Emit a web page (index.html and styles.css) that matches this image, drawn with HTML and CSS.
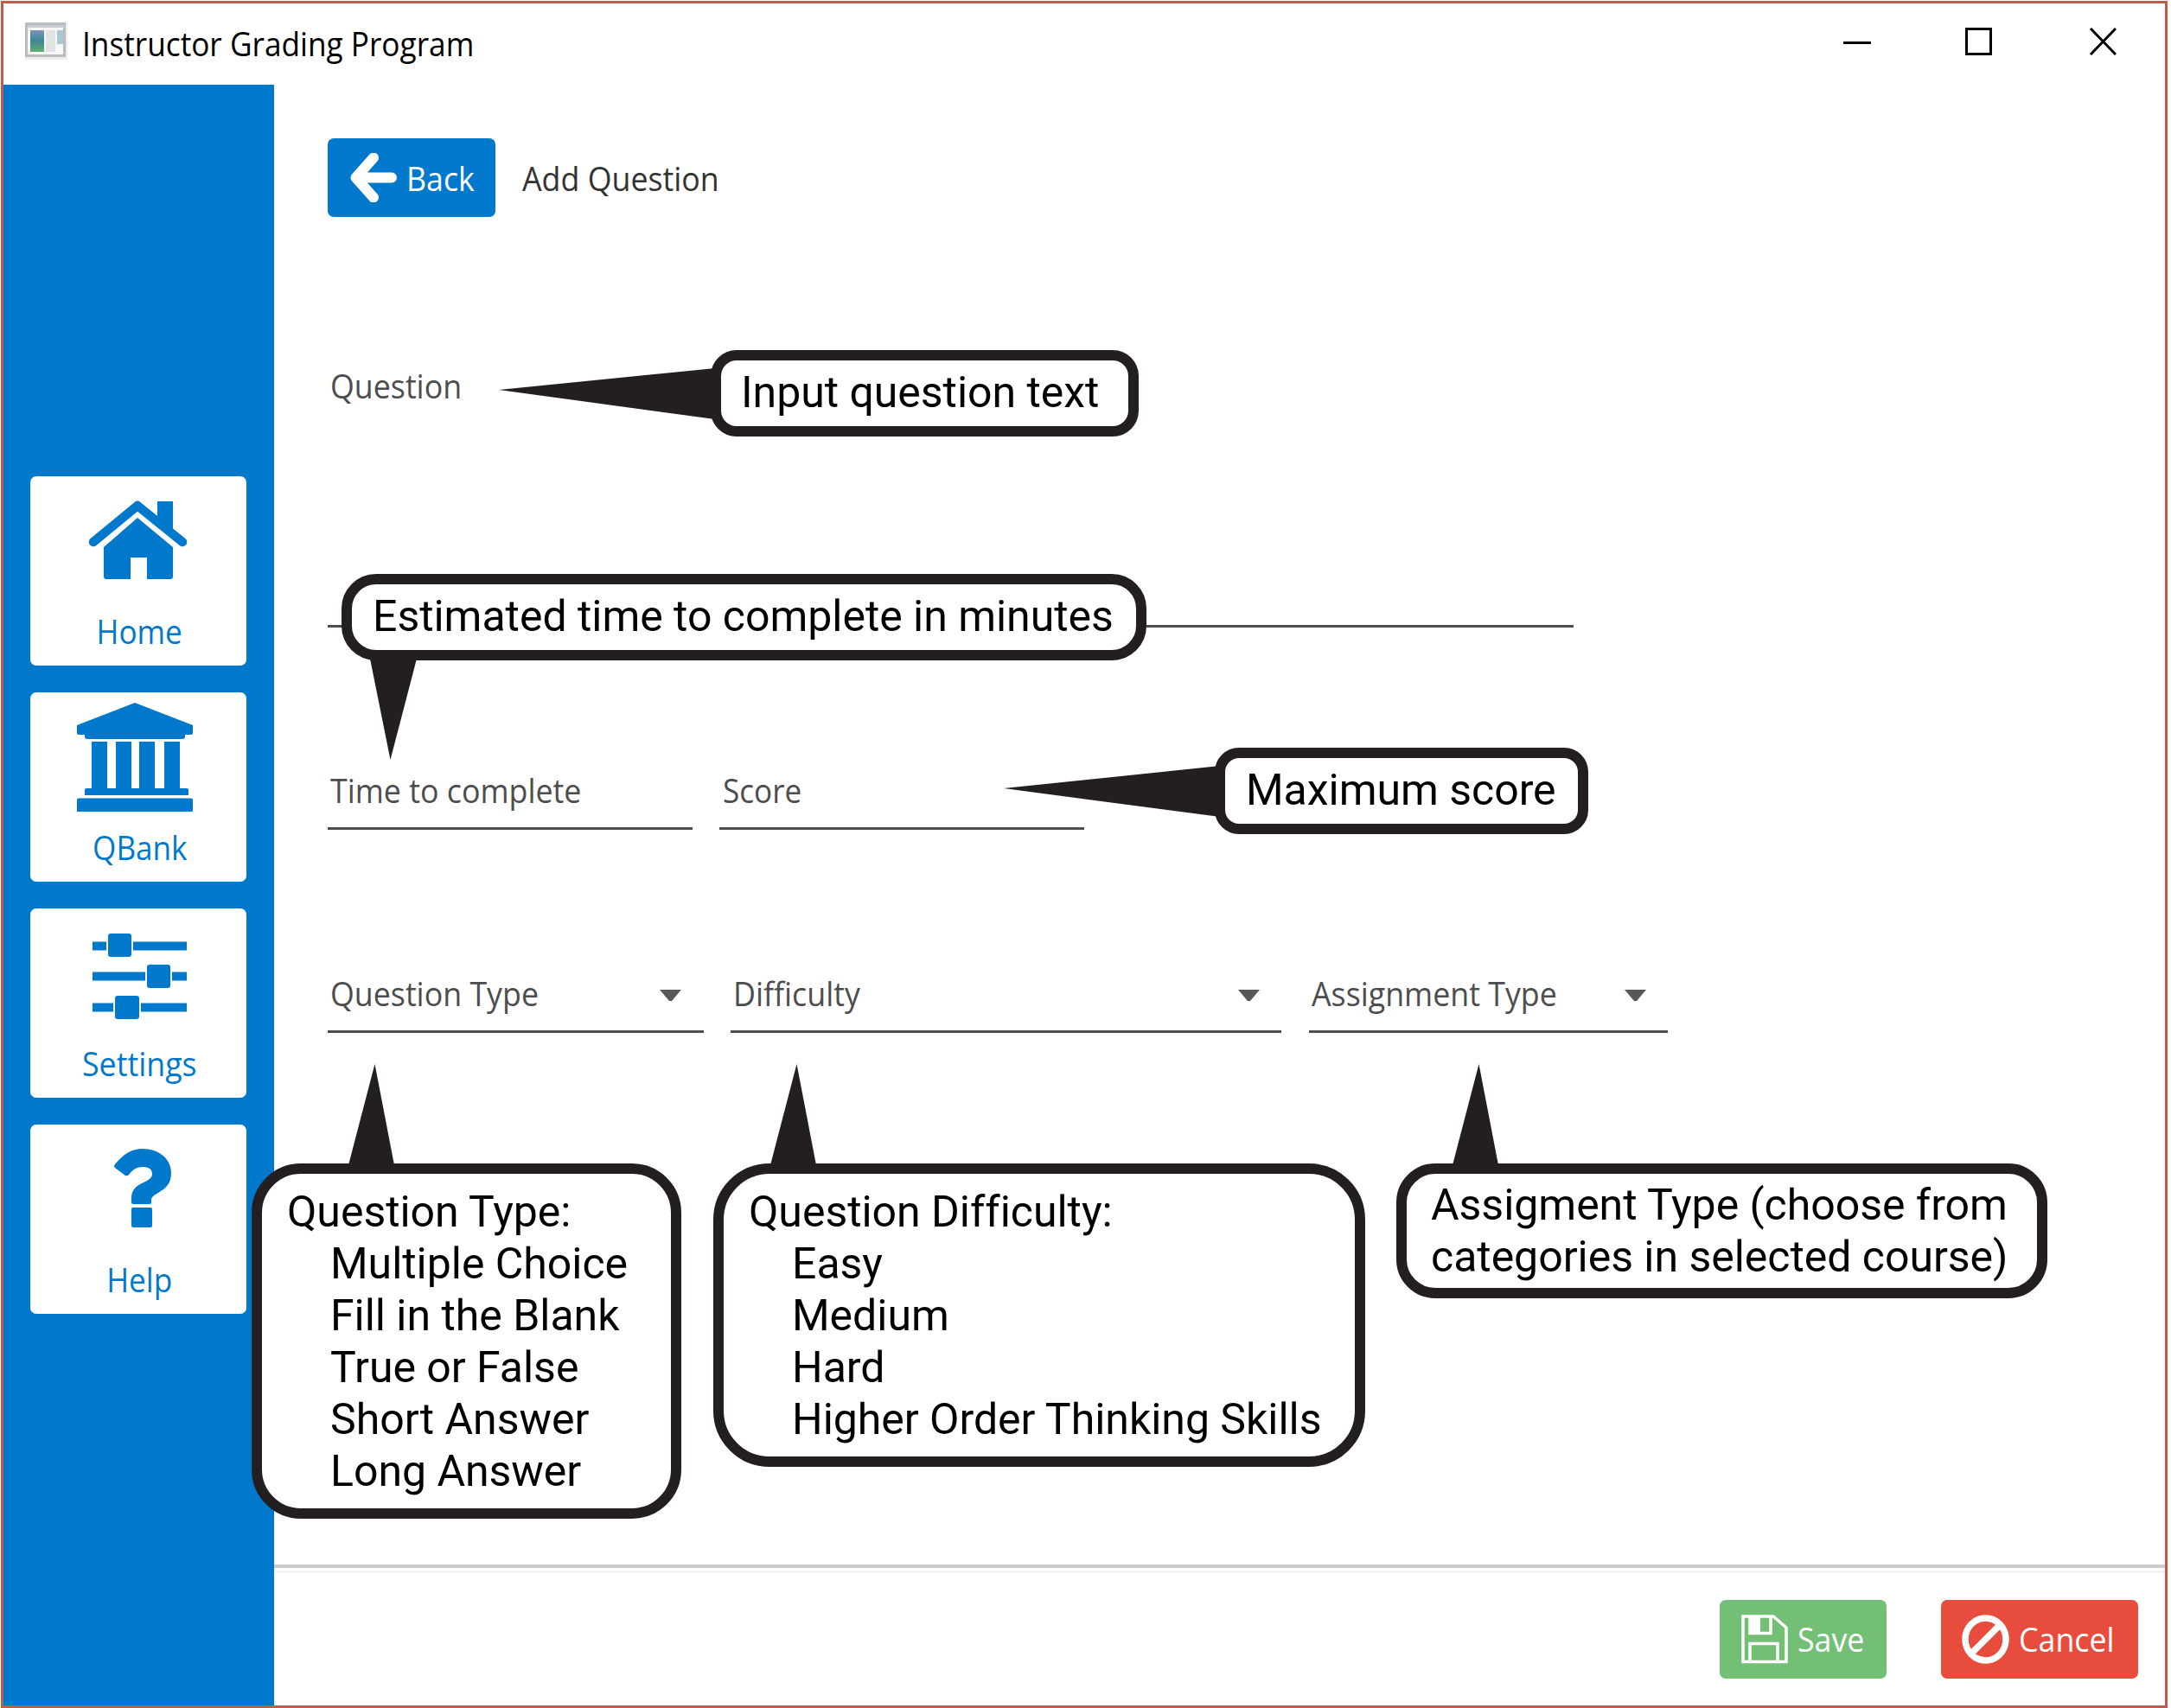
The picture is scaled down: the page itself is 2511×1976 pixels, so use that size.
FILE: index.html
```html
<!DOCTYPE html>
<html lang="en">
<head>
<meta charset="utf-8">
<title>Instructor Grading Program</title>
<link rel="stylesheet" href="styles.css">
</head>
<body>
<div class="window">
  <header class="titlebar">
    <svg class="app-icon" viewBox="0 0 49 43" width="49" height="43">
      <defs><linearGradient id="pane" x1="0" y1="0" x2="0" y2="1"><stop offset="0" stop-color="#7b93bd"/><stop offset=".5" stop-color="#3f8794"/><stop offset="1" stop-color="#5fb070"/></linearGradient></defs>
      <rect width="49" height="43" fill="#ececec"/>
      <rect x="1.500" y="1.500" width="44" height="37" fill="#f7f7f7" stroke="#b9bcbf" stroke-width="3"/>
      <rect x="3" y="3" width="43" height="3" fill="#c9cdd8"/>
      <rect x="6" y="9" width="16" height="25" fill="url(#pane)"/>
      <rect x="24" y="9" width="11" height="25" fill="#e3e3e3"/>
      <rect x="37" y="9" width="7" height="16" fill="#a9c9d2"/>
    </svg>
    <h1 class="title"><span class="t t-title">Instructor Grading Program</span></h1>
    <div class="controls">
      <svg class="minimize" width="32" height="32" viewBox="0 0 32 32"><path d="M0 17.500H32" stroke="#000" stroke-width="3"/></svg>
      <svg class="maximize" width="31" height="32" viewBox="0 0 31 32"><rect x="1.500" y="1.500" width="28" height="29" fill="none" stroke="#000" stroke-width="3"/></svg>
      <svg width="31" height="32" viewBox="0 0 31 32"><path d="M1 1L30 31M30 1L1 31" stroke="#000" stroke-width="3"/></svg>
    </div>
  </header>
  <div class="body">
    <nav class="sidebar">
      <a class="tile">
        <svg class="tile-icon" viewBox="0 0 250 150" width="250" height="150"><path d="M73 76L124 34L176 76" fill="none" stroke="#0078cb" stroke-width="10.500" stroke-linecap="round" stroke-linejoin="round"/><path d="M147 29h18v37l-18-15z"/><path d="M124 48L165 82v34q0 3-3 3h-27V94h-19v25H88q-3 0-3-3V82z"/></svg>
        <span class="tile-label t t-narrow">Home</span>
      </a>
      <a class="tile">
        <svg class="tile-icon" viewBox="0 0 250 150" width="250" height="150"><path d="M121 12L188 38v9q0 2-2 2h-7v2q0 3-3 3H66q-3 0-3-3v-2h-7q-2 0-2-2V38z"/><path d="M71 57h18v54h10V57h18v54h9V57h18v54h11V57h18v54h8q2 0 2 2v6H63v-6q0-2 2-2h6z"/><path d="M56 122.500h130q2 0 2 2V137q0 1-2 1H54v-13.500q0-2 2-2z"/></svg>
        <span class="tile-label t t-narrow">QBank</span>
      </a>
      <a class="tile">
        <svg class="tile-icon" viewBox="0 0 250 150" width="250" height="150"><path d="M72 43.500H181M72 78.500H181M72 114.500H181" stroke="#0078cb" stroke-width="10" fill="none"/><g stroke="#fff" stroke-width="2"><rect x="89" y="28" width="29" height="29" rx="4"/><rect x="134" y="64" width="29" height="29" rx="4"/><rect x="97" y="100" width="30" height="29" rx="4"/></g></svg>
        <span class="tile-label t">Settings</span>
      </a>
      <a class="tile">
        <svg class="tile-icon" viewBox="0 0 250 150" width="250" height="150"><path d="M98 46C108 34 117 28 130 28c18 0 33 11 33 28 0 13-7 18-15 23-5 3-8 5-8 8v3q0 2-2 2h-19q-2 0-2-2v-5c0-10 6-14 14-18 6-3 10-5 10-10 0-6-5-8-11-8-8 0-12 4-16 9q-2 2-4 1l-12-9q-2-2 0-4z"/><rect x="117" y="96" width="24" height="23" rx="2"/></svg>
        <span class="tile-label t t-narrow">Help</span>
      </a>
    </nav>
    <main class="main">
      <div class="page-head">
        <button class="btn btn-back">
          <svg width="54" height="57" viewBox="0 0 54 57"><path d="M27 5.500L6.500 28.500L27 51.500M10 28.500H48" fill="none" stroke="#fff" stroke-width="12" stroke-linecap="round" stroke-linejoin="round"/></svg>
          <span class="t">Back</span>
        </button>
        <span class="page-title t">Add Question</span>
      </div>
      <div class="field field-question"><span class="t">Question</span></div>
      <div class="row row-numbers">
        <div class="field field-num"><span class="t">Time to complete</span></div>
        <div class="field field-num"><span class="t t-narrow">Score</span></div>
      </div>
      <div class="row row-selects">
        <div class="field select select-type"><span class="t">Question Type</span><i class="caret"></i></div>
        <div class="field select select-diff"><span class="t">Difficulty</span><i class="caret"></i></div>
        <div class="field select select-assign"><span class="t">Assignment Type</span><i class="caret"></i></div>
      </div>
      <footer class="footer">
        <button class="btn btn-save">
          <svg width="54" height="57" viewBox="0 0 54 57"><g fill="none" stroke="#fff" stroke-width="3.500"><path d="M2 2H37L52 15V54.500H2z"/><path d="M10 2V21.500H34V2M10 54V33.500H42V54"/></g><path d="M10 3h12v17H10z" fill="#fff"/></svg>
          <span class="t">Save</span>
        </button>
        <button class="btn btn-cancel">
          <svg width="55" height="57" viewBox="0 0 55 57"><g fill="none" stroke="#fff" stroke-width="7.500"><ellipse cx="27.500" cy="28.500" rx="23.500" ry="24.500"/><path d="M11 45L44 12"/></g></svg>
          <span class="t">Cancel</span>
        </button>
      </footer>
    </main>
  </div>
</div>

<div class="callout c-question"><svg class="tail" width="250" height="57"><path d="M0 24L250 -1V58z"/></svg><p>Input question text</p></div>
<div class="callout c-time"><svg class="tail" width="54" height="117"><path d="M0 0H54L23.500 117z"/></svg><p>Estimated time to complete in minutes</p></div>
<div class="callout c-score"><svg class="tail" width="250" height="57"><path d="M0 25L250 -1V58z"/></svg><p>Maximum score</p></div>
<div class="callout c-type"><svg class="tail" width="53" height="117"><path d="M0 117H53L30.500 0z"/></svg><p>Question Type:</p><ul><li>Multiple Choice</li><li>Fill in the Blank</li><li>True or False</li><li>Short Answer</li><li>Long Answer</li></ul></div>
<div class="callout c-diff"><svg class="tail" width="53" height="117"><path d="M0 117H53L30.500 0z"/></svg><p>Question Difficulty:</p><ul><li>Easy</li><li>Medium</li><li>Hard</li><li>Higher Order Thinking Skills</li></ul></div>
<div class="callout c-assign"><svg class="tail" width="53" height="117"><path d="M0 117H53L30.500 0z"/></svg><p>Assigment Type (choose from<br>categories in selected course)</p></div>
</body>
</html>
```
FILE: styles.css
```css
* { box-sizing: border-box; margin: 0; padding: 0; }
html { background: #fff; }
body { position: relative; height: 1976px; padding: 1px 4px 0 1px; overflow: hidden; font-family: "Open Sans", "Noto Sans", sans-serif; font-size: 39px; line-height: 50px; font-variant-ligatures: none; color: #4d4d4d; }
.window { display: flex; flex-direction: column; height: 1975px; border: 3px solid #c45a4c; background: #fff; }

/* Slightly condensed interface lettering */
.t { display: inline-block; white-space: nowrap; transform: scaleX(.917); transform-origin: 0 50%; }
.t-narrow { transform: scaleX(.9); }
.t-title { transform: scaleX(.903); }

.titlebar { display: flex; height: 94px; flex: none; align-items: flex-start; padding: 22px 56px 0 25px; }
.title { flex: 1; margin: -1px 0 0 17px; font-size: 39px; font-weight: 400; color: #000; }
.controls { display: flex; padding-top: 6px; }
.minimize { margin-right: 109px; }
.maximize { margin-right: 113px; }

.body { display: flex; flex: 1; }
.sidebar { display: flex; flex-direction: column; gap: 31px; width: 313px; padding: 453px 32px 0 31px; background: #0078cb; }
.tile { display: flex; flex-direction: column; align-items: center; height: 219px; border-radius: 7px; background: #fff; color: #0078cb; fill: #0078cb; }
.tile-icon { flex: none; }
.tile-label { margin: 4px 0 0 3px; transform-origin: 50% 50%; }

.main { display: flex; flex: 1; flex-direction: column; padding-top: 62px; }
.page-head { display: flex; align-items: center; height: 91px; padding-left: 62px; }
.btn { display: flex; align-items: center; height: 91px; border: 0; border-radius: 7px; font: inherit; color: #fff; }
.btn-back { width: 194px; padding-left: 26px; gap: 11px; background: #0078cb; }
.page-title { margin-left: 31px; color: #333; }
.field { height: 71px; padding-left: 3px; border-bottom: 3px solid #4d4d4d; }
.field-question { width: 1441px; height: 306px; margin: 169px 0 0 62px; padding-top: 1px; }
.row { display: flex; gap: 31px; margin-left: 62px; }
.row-numbers { margin-top: 163px; }
.row-selects { margin-top: 164px; }
.field-num { width: 422px; }
.field-num + .field-num { padding-left: 4px; }
.select { display: flex; justify-content: space-between; padding-right: 25px; }
.select-type { width: 435px; padding-right: 26px; }
.select-diff { width: 637px; }
.select-assign { width: 415px; margin-left: 1px; }
.caret { width: 25px; height: 13px; margin-top: 21px; background: #585858; clip-path: polygon(0 0, 100% 0, 56% 100%, 44% 100%); }
.footer { display: flex; justify-content: flex-end; gap: 63px; height: 163px; margin-top: auto; padding: 41px 31px 0 0; background: linear-gradient(#cdcdcd 4px, #fff 4px, #fff 7px, #f4f4f4 7px, #f4f4f4 10px, #fff 10px); }
.btn-save { width: 193px; padding-left: 25px; gap: 11px; background: #73bf75; }
.btn-cancel { width: 228px; padding-left: 24px; gap: 11px; background: #e74c3c; }
.footer .t { margin-top: -2px; }

/* Annotation callouts over the window */
.callout { position: absolute; border: 12px solid #231f20; background: #fff; font-family: Roboto, sans-serif; font-size: 50px; line-height: 60px; letter-spacing: -.03px; color: #000; white-space: nowrap; }
.callout ul { list-style: none; padding-left: 50px; }
.tail { position: absolute; overflow: visible; fill: #231f20; }
.c-question { left: 822px; top: 405px; width: 495px; height: 100px; padding: 7px 0 0 23px; border-radius: 30px; }
.c-question .tail { left: -257px; top: 10px; }
.c-time { left: 395px; top: 664px; width: 931px; height: 100px; padding: 7px 0 0 24px; border-radius: 40px; }
.c-time .tail { left: 21px; top: 86px; }
.c-score { left: 1405px; top: 865px; width: 432px; height: 100px; padding: 7px 0 0 24px; border-radius: 28px; }
.c-score .tail { left: -256px; top: 10px; }
.c-type { left: 291px; top: 1346px; width: 497px; height: 411px; padding: 14px 0 0 29px; border-radius: 57px; }
.c-type .tail { left: 100px; top: -127px; }
.c-diff { left: 825px; top: 1346px; width: 754px; height: 351px; padding: 14px 0 0 29px; border-radius: 65px; }
.c-diff .tail { left: 54px; top: -127px; }
.c-assign { left: 1615px; top: 1346px; width: 753px; height: 156px; padding: 6px 0 0 28px; border-radius: 45px; }
.c-assign .tail { left: 53px; top: -127px; }
```
